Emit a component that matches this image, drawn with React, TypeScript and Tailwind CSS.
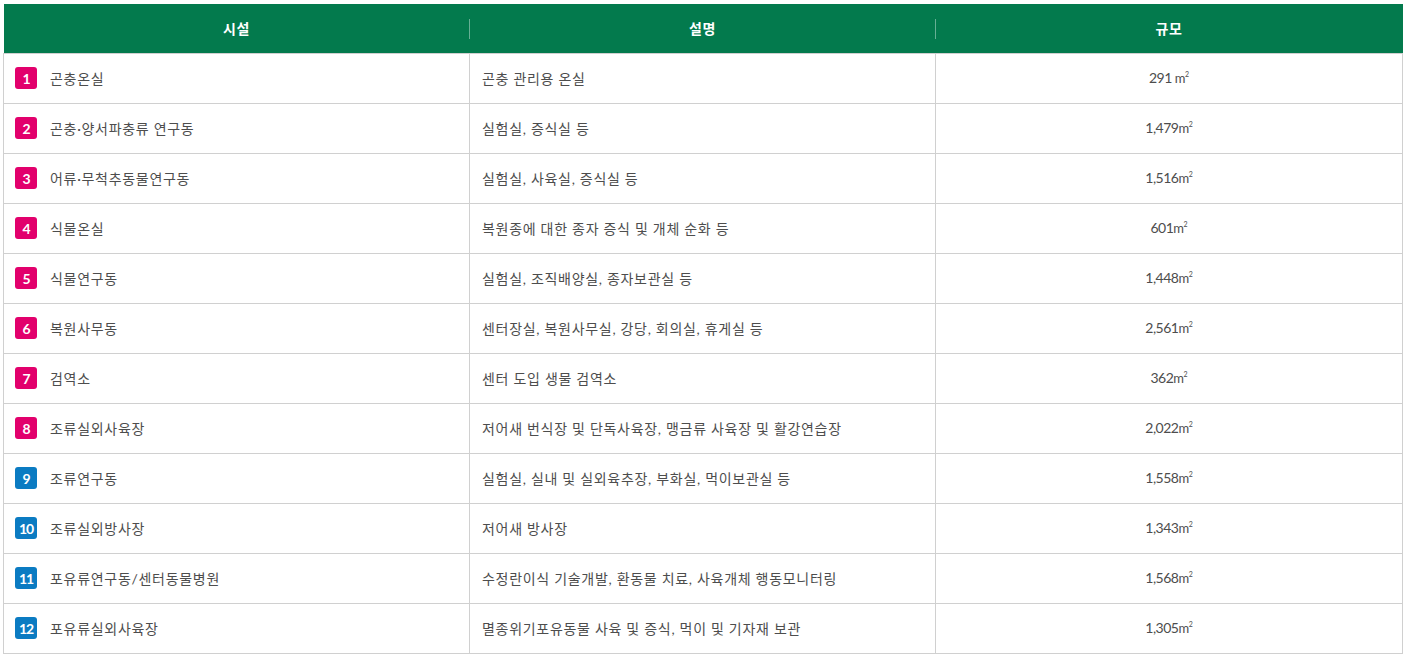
import React from "react";

type Row = {
  no: number;
  name: string;
  desc: string;
  size: string;
};

const rows: Row[] = [
  { no: 1, name: "곤충온실", desc: "곤충 관리용 온실", size: "291 " },
  { no: 2, name: "곤충·양서파충류 연구동", desc: "실험실, 증식실 등", size: "1,479" },
  { no: 3, name: "어류·무척추동물연구동", desc: "실험실, 사육실, 증식실 등", size: "1,516" },
  { no: 4, name: "식물온실", desc: "복원종에 대한 종자 증식 및 개체 순화 등", size: "601" },
  { no: 5, name: "식물연구동", desc: "실험실, 조직배양실, 종자보관실 등", size: "1,448" },
  { no: 6, name: "복원사무동", desc: "센터장실, 복원사무실, 강당, 회의실, 휴게실 등", size: "2,561" },
  { no: 7, name: "검역소", desc: "센터 도입 생물 검역소", size: "362" },
  { no: 8, name: "조류실외사육장", desc: "저어새 번식장 및 단독사육장, 맹금류 사육장 및 활강연습장", size: "2,022" },
  { no: 9, name: "조류연구동", desc: "실험실, 실내 및 실외육추장, 부화실, 먹이보관실 등", size: "1,558" },
  { no: 10, name: "조류실외방사장", desc: "저어새 방사장", size: "1,343" },
  { no: 11, name: "포유류연구동/센터동물병원", desc: "수정란이식 기술개발, 환동물 치료, 사육개체 행동모니터링", size: "1,568" },
  { no: 12, name: "포유류실외사육장", desc: "멸종위기포유동물 사육 및 증식, 먹이 및 기자재 보관", size: "1,305" },
];

const App: React.FC = () => {
  return (
    <div className="w-[1405px] h-[662px] bg-white pt-1 px-[3px] font-['Lato','Noto_Sans_CJK_KR',sans-serif]">
      <table className="w-[1399px] border-collapse table-fixed">
        <colgroup>
          <col className="w-[466px]" />
          <col className="w-[466px]" />
          <col className="w-[467px]" />
        </colgroup>
        <thead>
          <tr className="h-[49px] bg-[#037a4d] text-white text-[14px] font-bold">
            <th className="text-center tracking-[0.5px]">시설</th>
            <th className="relative text-center tracking-[0.5px]">
              <span className="absolute left-[-1px] top-[15px] h-[20px] w-px bg-white/40" />
              설명
            </th>
            <th className="relative text-center tracking-[0.5px]">
              <span className="absolute left-[-1px] top-[15px] h-[20px] w-px bg-white/40" />
              규모
            </th>
          </tr>
        </thead>
        <tbody className="text-[14px] text-[#4d4d4d]">
          {rows.map((r) => (
            <tr key={r.no} className="h-[50px]">
              <td className="border border-[#d0d0d0] pl-[11px]">
                <div className="flex items-center gap-[13px]">
                  <span
                    className={
                      r.no <= 8
                        ? "flex h-[22px] w-[22px] items-center justify-center rounded-[3px] bg-[#e2006c] text-[14px] font-bold text-white tracking-[-1px]"
                        : "flex h-[22px] w-[22px] items-center justify-center rounded-[3px] bg-[#0b7bc2] text-[14px] font-bold text-white tracking-[-1px]"
                    }
                  >
                    {r.no}
                  </span>
                  <span className="tracking-[0.7px]">{r.name}</span>
                </div>
              </td>
              <td className="border border-[#d0d0d0] pl-[12px] tracking-[0.7px]">{r.desc}</td>
              <td className="border border-[#d0d0d0] text-center">
                <span className="tracking-[-0.5px]">{r.size}</span>
                <span className="text-[13px] tracking-[-0.5px]">m</span>
                <sup className="text-[7px] top-[-6px]">2</sup>
              </td>
            </tr>
          ))}
        </tbody>
      </table>
    </div>
  );
};

export default App;
